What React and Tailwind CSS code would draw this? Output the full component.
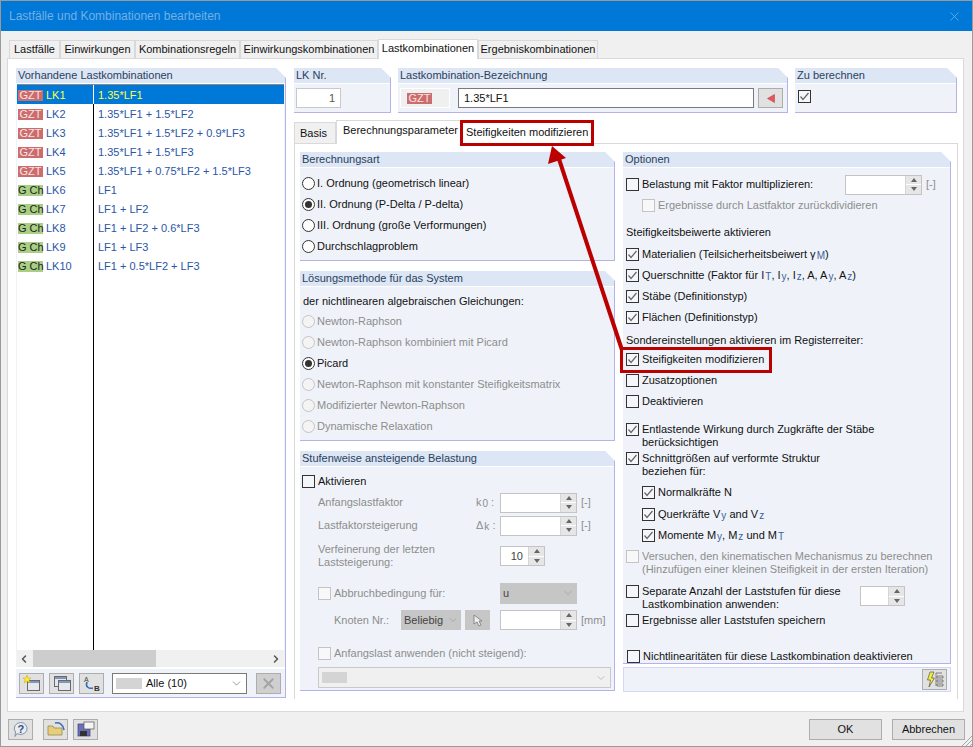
import { ChevronDown, ChevronLeft, ChevronRight, X } from "lucide-react";

const combos = [
  ["GZT", "LK1", "1.35*LF1"],
  ["GZT", "LK2", "1.35*LF1 + 1.5*LF2"],
  ["GZT", "LK3", "1.35*LF1 + 1.5*LF2 + 0.9*LF3"],
  ["GZT", "LK4", "1.35*LF1 + 1.5*LF3"],
  ["GZT", "LK5", "1.35*LF1 + 0.75*LF2 + 1.5*LF3"],
  ["G Ch", "LK6", "LF1"],
  ["G Ch", "LK7", "LF1 + LF2"],
  ["G Ch", "LK8", "LF1 + LF2 + 0.6*LF3"],
  ["G Ch", "LK9", "LF1 + LF3"],
  ["G Ch", "LK10", "LF1 + 0.5*LF2 + LF3"],
];

const Group = ({ title, className = "", bodyClass = "", children }) => (
  <div className={`flex flex-col bg-[#eff3f9] border-r border-b border-[#b3b3ea] [clip-path:polygon(0_0,calc(100%-10px)_0,100%_10px,100%_100%,0_100%)] ${className}`}>
    <div className="h-[16px] shrink-0 bg-[#dce6f4] border-b border-white pl-[2px] text-[#2b3f5c] leading-[15px] whitespace-nowrap">{title}</div>
    <div className={`flex-1 min-h-0 ${bodyClass}`}>{children}</div>
  </div>
);

const Check = ({ on, off }) => (
  <span className={`w-[13px] h-[13px] shrink-0 border flex items-center justify-center ${off ? "border-[#c4c4c4] bg-[#f8f8f8]" : "border-[#333] bg-[#f4f6fa]"}`}>
    {on && (
      <svg width="11" height="11" viewBox="0 0 11 11">
        <path d="M1.5 5.5 L4 8.5 L9.5 2" fill="none" stroke="#666" strokeWidth="1.2" />
      </svg>
    )}
  </span>
);

const CheckRow = ({ on, off, label, className = "", lines }) => (
  <div className={`flex gap-[3px] whitespace-nowrap ${lines ? "items-start" : "items-center h-[21px]"} ${className}`}>
    <Check on={on} off={off} />
    <span className={off ? "text-[#8d8d8d]" : "text-[#111]"}>{label}</span>
  </div>
);

const Radio = ({ on, off, label }) => (
  <div className="flex items-center h-[21px] gap-[2px] whitespace-nowrap">
    <span className={`w-[13px] h-[13px] rounded-full border flex items-center justify-center shrink-0 ${off ? "border-[#c4c4c4] bg-[#f4f4f4]" : "border-[#333] bg-white"}`}>
      {on && <span className="w-[7px] h-[7px] rounded-full bg-[#333]" />}
    </span>
    <span className={off ? "text-[#8d8d8d]" : "text-[#111]"}>{label}</span>
  </div>
);

const Spin = ({ w = 77, value, field = "bg-white" }) => (
  <span className="flex h-[20px] border border-[#c4c4c4] shrink-0" style={{ width: w }}>
    <span className={`flex-1 ${field} text-right pr-[5px] leading-[18px] text-[#444]`}>{value}</span>
    <span className="w-[16px] flex flex-col bg-[#e6e6e6] border-l border-[#d6d6d6]">
      <span className="flex-1 flex items-center justify-center">
        <span className="w-0 h-0 border-x-[3px] border-x-transparent border-b-[4px] border-b-[#666]" />
      </span>
      <span className="flex-1 flex items-center justify-center border-t border-white">
        <span className="w-0 h-0 border-x-[3px] border-x-transparent border-t-[4px] border-t-[#666]" />
      </span>
    </span>
  </span>
);

const ToolBtn = ({ children, className = "", bg = "bg-[#e1e1e1]" }) => (
  <span className={`w-[25px] h-[21px] shrink-0 border border-[#adadad] ${bg} flex items-center justify-center ${className}`}>{children}</span>
);

const Sub = ({ children, c = "text-[#3a5f9e]" }) => (
  <span className={`text-[10px] ml-[1px] relative top-[1px] ${c}`}>{children}</span>
);

const WinIcon = ({ x, y }) => (
  <g>
    <rect x={x + 0.5} y={y + 0.5} width="12" height="10" fill="#e4e7ec" stroke="#6a6a6a" />
    <rect x={x + 1} y={y + 1} width="11" height="2" fill="#7f96bd" />
  </g>
);

const tabs = [
  ["Lastfälle", "w-[51px]"],
  ["Einwirkungen", "w-[75px]"],
  ["Kombinationsregeln", "w-[105px]"],
  ["Einwirkungskombinationen", "w-[138px]"],
  ["Lastkombinationen", "w-[100px]"],
  ["Ergebniskombinationen", "w-[120px]"],
];

const App = () => (
  <div className="relative w-[973px] h-[747px] overflow-hidden flex flex-col bg-[#f0f0f0] border border-[#9a9a9a] text-[11px] font-['Liberation_Sans',Arial,sans-serif] text-[#111]">
    {/* titlebar */}
    <div className="h-[30px] shrink-0 bg-[#0078d7] flex items-center justify-between pl-[8px] pr-[10px]">
      <span className="text-[12px] text-[#74afe6]">Lastfälle und Kombinationen bearbeiten</span>
      <X size={15} strokeWidth={1} className="text-[#8cc0ea]" />
    </div>

    {/* top tabs */}
    <div className="h-[27px] shrink-0 flex items-end pl-[8px]">
      {tabs.map(([t, w]) => (
        <span
          key={t}
          className={
            t === "Lastkombinationen"
              ? `${w} h-[20px] text-center bg-white border border-b-0 border-[#d9d9d9] leading-[16px] relative top-px whitespace-nowrap`
              : `${w} h-[18px] text-center bg-[#f0f0f0] border border-b-0 border-[#d9d9d9] leading-[17px] whitespace-nowrap`
          }
        >
          {t}
        </span>
      ))}
    </div>

    {/* main panel */}
    <div className="w-[957px] h-[654px] ml-[6px] bg-white border border-[#d9d9d9] flex gap-[8px] pt-[9px] pl-[8px]">
      {/* left list */}
      <Group title="Vorhandene Lastkombinationen" className="w-[270px] h-[630px]" bodyClass="flex flex-col">
        <div className="relative mx-[1px] flex-1 bg-white border-t border-[#888] overflow-hidden flex">
          <div className="w-[77px] shrink-0 border-r border-black">
            {combos.map(([kind, nr], i) => (
              <div key={nr} className={`h-[19px] flex items-center pt-px ${i === 0 ? "bg-[#0078d7] -mr-px border-r border-white" : ""}`}>
                <span className={`w-[25px] ml-px h-[11px] text-center leading-[11px] whitespace-nowrap ${kind === "GZT" ? "bg-[#cd6c6c] text-[#f6e6e6]" : "bg-[#a9cf85] text-[#222]"}`}>{kind}</span>
                <span className={`pl-[3px] ${i === 0 ? "text-[#ffff40]" : "text-[#2a55a8]"}`}>{nr}</span>
              </div>
            ))}
          </div>
          <div className="flex-1">
            {combos.map(([kind, nr, formula], i) => (
              <div key={nr} className={`h-[19px] flex items-center pt-px pl-[4px] whitespace-nowrap ${i === 0 ? "bg-[#0078d7] text-[#ffff40]" : "text-[#2a55a8]"}`}>{formula}</div>
            ))}
          </div>
        </div>
        <div className="mx-[1px] h-[17px] bg-[#f0f0f0] flex items-center justify-between shrink-0">
          <ChevronLeft size={12} strokeWidth={3} className="text-[#555] ml-[1px]" />
          <span className="w-[123px] h-full bg-[#cdcdcd] mr-auto ml-[3px]" />
          <ChevronRight size={12} strokeWidth={3} className="text-[#555] mr-[2px]" />
        </div>
        <div className="h-[30px] shrink-0 flex items-center pl-[3px] gap-[5px] border-t-2 border-white">
          <ToolBtn>
            <svg width="18" height="16" viewBox="0 0 18 16">
              <WinIcon x={4} y={5} />
              <path d="M4 0 L5 3 L8 3 L6 5 L7 8 L4 6 L1 8 L2 5 L0 3 L3 3 Z" fill="#ffe93a" stroke="#c9a800" strokeWidth="0.5" />
            </svg>
          </ToolBtn>
          <ToolBtn>
            <svg width="18" height="16" viewBox="0 0 18 16">
              <WinIcon x={1} y={1} />
              <WinIcon x={5} y={5} />
            </svg>
          </ToolBtn>
          <ToolBtn>
            <svg width="20" height="17" viewBox="0 0 20 17">
              <text x="2" y="7" fontSize="7" fill="#444">A</text>
              <path d="M5 7 C3 12 7 14 11 13" fill="none" stroke="#2d6fb5" strokeWidth="1.6" />
              <text x="12" y="16" fontSize="8" fontWeight="bold" fill="#333">B</text>
            </svg>
          </ToolBtn>
          <span className="ml-[3px] w-[135px] h-[21px] bg-white border border-[#7a7a7a] flex items-center pl-[3px] pr-[3px]">
            <span className="w-[26px] h-[11px] bg-[#d4d4d4] mr-[4px]" />
            <span>Alle (10)</span>
            <ChevronDown size={13} strokeWidth={1} className="ml-auto text-[#444]" />
          </span>
          <ToolBtn className="ml-[4px]" bg="bg-[#cfcfcf]">
            <X size={17} strokeWidth={2.5} className="text-[#a3a3a3]" />
          </ToolBtn>
        </div>
      </Group>

      {/* right side */}
      <div className="w-[664px] flex flex-col">
        <div className="flex h-[45px] gap-[7px]">
          <Group title="LK Nr." className="w-[97px]" bodyClass="pt-[4px] pl-[2px]">
            <span className="block w-[45px] h-[20px] bg-white border border-[#c9c9c9] text-right pr-[5px] text-[#555] leading-[19px]">1</span>
          </Group>
          <Group title="Lastkombination-Bezeichnung" className="w-[390px]" bodyClass="pt-[4px] pl-[2px] flex items-start">
            <span className="w-[50px] h-[20px] bg-[#f0f0f0] border border-white flex items-center pl-[6px]">
              <span className="w-[25px] h-[11px] bg-[#cd6c6c] text-[#f6e6e6] text-center leading-[11px]">GZT</span>
            </span>
            <span className="ml-[8px] w-[296px] h-[20px] bg-white border border-[#7a7a7a] pl-[5px] leading-[18px]">1.35*LF1</span>
            <span className="ml-[4px] w-[25px] h-[20px] bg-[#e1e1e1] border border-[#adadad] flex items-center justify-center">
              <svg width="8" height="9" viewBox="0 0 8 9">
                <path d="M7.5 0.5 L7.5 8.5 L0.5 4.5 Z" fill="#e4575d" stroke="#b33" strokeWidth="0.5" />
              </svg>
            </span>
          </Group>
          <Group title="Zu berechnen" className="w-[162px]" bodyClass="pt-[6px] pl-[3px]">
            <Check on />
          </Group>
        </div>

        {/* sub tabs */}
        <div className="h-[30px] flex items-end">
          <span className="h-[21px] w-[42px] pl-[5px] bg-[#f0f0f0] border border-b-0 border-[#d9d9d9] leading-[20px]">Basis</span>
          <span className="h-[24px] w-[125px] pl-[6px] bg-white border border-b-0 border-[#d9d9d9] leading-[19px] whitespace-nowrap relative top-px">Berechnungsparameter</span>
          <span className="h-[21px] pl-[5px] pr-[6px] leading-[20px] whitespace-nowrap">Steifigkeiten modifizieren</span>
        </div>

        {/* sub panel */}
        <div className="w-[664px] h-[556px] border border-[#d9d9d9] border-b-0 flex gap-[8px] pt-[8px] pl-[5px]">
          <div className="w-[315px] flex flex-col gap-[10px]">
            <Group title="Berechnungsart" className="h-[109px]" bodyClass="pt-[5px] pl-[2px]">
              <Radio on={false} label="I. Ordnung (geometrisch linear)" />
              <Radio on label="II. Ordnung (P-Delta / P-delta)" />
              <Radio label="III. Ordnung (große Verformungen)" />
              <Radio label="Durchschlagproblem" />
            </Group>
            <Group title="Lösungsmethode für das System" className="h-[170px]" bodyClass="pt-[4px] pl-[2px]">
              <div className="h-[20px] leading-[20px] pl-px">der nichtlinearen algebraischen Gleichungen:</div>
              <Radio off label="Newton-Raphson" />
              <Radio off label="Newton-Raphson kombiniert mit Picard" />
              <Radio on label="Picard" />
              <Radio off label="Newton-Raphson mit konstanter Steifigkeitsmatrix" />
              <Radio off label="Modifizierter Newton-Raphson" />
              <Radio off label="Dynamische Relaxation" />
            </Group>
            <Group title="Stufenweise ansteigende Belastung" className="h-[240px]" bodyClass="pt-[4px] pl-[2px] text-[#8d8d8d]">
              <CheckRow label="Aktivieren" />
              <div className="flex items-center h-[23px] pl-[16px] -mt-px">
                <span className="w-[158px]">Anfangslastfaktor</span>
                <span className="w-[24px]">k<Sub c="text-[#8d8d8d]">0</Sub> :</span>
                <Spin />
                <span className="ml-[4px]">[-]</span>
              </div>
              <div className="flex items-center h-[23px] pl-[16px]">
                <span className="w-[158px]">Lastfaktorsteigerung</span>
                <span className="w-[24px]">Δ<Sub c="text-[#8d8d8d]">k</Sub> :</span>
                <Spin />
                <span className="ml-[4px]">[-]</span>
              </div>
              <div className="flex items-center h-[34px] mt-[2px] pl-[16px]">
                <span className="w-[182px] leading-[13px]">Verfeinerung der letzten<br />Laststeigerung:</span>
                <Spin w={45} value="10" />
              </div>
              <div className="flex items-center h-[22px] mt-[9px] pl-[16px]">
                <Check off />
                <span className="w-[169px] pl-[3px] whitespace-nowrap">Abbruchbedingung für:</span>
                <span className="w-[77px] h-[21px] bg-[#c6c6c6] flex items-center justify-between px-[3px] text-[#444]">
                  u
                  <ChevronDown size={12} strokeWidth={1} className="text-[#8d8d8d]" />
                </span>
              </div>
              <div className="flex items-center h-[22px] mt-[5px] pl-[32px]">
                <span className="w-[67px]">Knoten Nr.:</span>
                <span className="w-[60px] h-[20px] bg-[#c6c6c6] flex items-center justify-between pl-[3px] pr-[2px] text-[#444]">
                  Beliebig
                  <ChevronDown size={12} strokeWidth={1} className="text-[#8d8d8d]" />
                </span>
                <span className="ml-[4px] w-[25px] h-[20px] bg-[#c6c6c6] flex items-center justify-center">
                  <svg width="14" height="16" viewBox="0 0 14 16">
                    <path d="M3 3 L3 12 L6 10 L8 14 L10 13 L8 9 L11 9 Z" fill="#eee" stroke="#777" strokeWidth="0.8" />
                  </svg>
                </span>
                <span className="ml-[10px]"><Spin /></span>
                <span className="ml-[4px]">[mm]</span>
              </div>
              <div className="flex items-center h-[20px] mt-[12px] pl-[16px] gap-[3px] whitespace-nowrap">
                <Check off />
                <span>Anfangslast anwenden (nicht steigend):</span>
              </div>
              <span className="mt-[4px] ml-[16px] w-[293px] h-[21px] bg-[#f0f0f0] border border-[#c9c9c9] flex items-center justify-between pl-[3px] pr-[3px]">
                <span className="w-[25px] h-[11px] bg-[#d4d4d4]" />
                <ChevronDown size={12} strokeWidth={1} className="text-[#8d8d8d]" />
              </span>
            </Group>
          </div>

          <div className="w-[328px] flex flex-col gap-[3px]">
            <Group title="Optionen" className="h-[512px]" bodyClass="pt-[6px] pl-[3px]">
              <div className="flex items-center h-[21px]">
                <div className="w-[219px]"><CheckRow label="Belastung mit Faktor multiplizieren:" /></div>
                <Spin />
                <span className="ml-[4px] text-[#8d8d8d]">[-]</span>
              </div>
              <CheckRow off label="Ergebnisse durch Lastfaktor zurückdividieren" className="pl-[16px]" />
              <div className="h-[21px] mt-[6px] leading-[20px]">Steifigkeitsbeiwerte aktivieren</div>
              <CheckRow on className="mt-px" label={<>Materialien (Teilsicherheitsbeiwert γ<Sub>M</Sub>)</>} />
              <CheckRow on label={<>Querschnitte (Faktor für I<Sub>T</Sub>, I<Sub>y</Sub>, I<Sub>z</Sub>, A, A<Sub>y</Sub>, A<Sub>z</Sub>)</>} />
              <CheckRow on label="Stäbe (Definitionstyp)" />
              <CheckRow on label="Flächen (Definitionstyp)" />
              <div className="h-[21px] mt-[2px] leading-[20px] whitespace-nowrap">Sondereinstellungen aktivieren im Registerreiter:</div>
              <CheckRow on label="Steifigkeiten modifizieren" className="-mt-[2px]" />
              <CheckRow label="Zusatzoptionen" />
              <CheckRow label="Deaktivieren" />
              <CheckRow on lines label={<>Entlastende Wirkung durch Zugkräfte der Stäbe<br />berücksichtigen</>} className="mt-[11px] leading-[13px]" />
              <CheckRow on lines label={<>Schnittgrößen auf verformte Struktur<br />beziehen für:</>} className="mt-[3px] leading-[13px]" />
              <div className="pl-[16px] mt-[4px]">
                <CheckRow on label="Normalkräfte N" />
                <CheckRow on className="mt-px" label={<>Querkräfte V<Sub>y</Sub> and V<Sub>z</Sub></>} />
                <CheckRow on label={<>Momente M<Sub>y</Sub>, M<Sub>z</Sub> und M<Sub>T</Sub></>} />
              </div>
              <CheckRow off lines label={<>Versuchen, den kinematischen Mechanismus zu berechnen<br />(Hinzufügen einer kleinen Steifigkeit in der ersten Iteration)</>} className="mt-[4px] leading-[13px]" />
              <div className="flex items-start mt-[9px]">
                <div className="w-[234px]"><CheckRow lines label={<>Separate Anzahl der Laststufen für diese<br />Lastkombination anwenden:</>} className="leading-[13px]" /></div>
                <span className="mt-[1px]"><Spin w={45} /></span>
              </div>
              <CheckRow label="Ergebnisse aller Laststufen speichern" className="-mt-px" />
              <CheckRow label="Nichtlinearitäten für diese Lastkombination deaktivieren" className="mt-[15px] pl-px" />
            </Group>
            <div className="h-[25px] bg-[#eff3f9] border border-[#d4d8f4] flex items-center justify-end pr-[3px]">
              <ToolBtn>
                <svg width="20" height="17" viewBox="0 0 20 17">
                  <path d="M5 1 L9 1 L6.5 7 L9.5 7 L4 16 L5.5 9 L2.5 9 Z" fill="#f1ee3e" stroke="#555" strokeWidth="0.7" />
                  <path d="M11 2 H17 M11 2 V15 M12 5 H18 V7 H12 Z M12 9 H18 V11 H12 Z M12 13 H18 V15 H12 Z" fill="none" stroke="#666" strokeWidth="0.8" />
                </svg>
              </ToolBtn>
            </div>
          </div>
        </div>
      </div>
    </div>

    {/* footer */}
    <div className="flex-1 flex items-center pl-[7px] pr-[7px]">
      <ToolBtn>
        <svg width="17" height="17" viewBox="0 0 17 17">
          <path d="M8.5 1.5 A6.5 6 0 1 1 5 12.5 L3 15.5 L3.5 11 A6.5 6 0 0 1 8.5 1.5 Z" fill="#e8edf4" stroke="#8392a8" />
          <text x="5.5" y="12" fontSize="11" fontWeight="bold" fill="#35507f">?</text>
        </svg>
      </ToolBtn>
      <ToolBtn className="ml-[10px]">
        <svg width="18" height="16" viewBox="0 0 18 16">
          <path d="M1 5 H6 L7 7 H15 V14 H1 Z" fill="#e6cf7c" stroke="#927f3d" strokeWidth="0.7" />
          <path d="M8 2 C12 1 16 3 17 9" fill="none" stroke="#3f6fb5" strokeWidth="1.6" />
        </svg>
      </ToolBtn>
      <ToolBtn className="ml-[5px]">
        <svg width="18" height="16" viewBox="0 0 18 16">
          <rect x="1" y="3" width="12" height="12" fill="#6a70b8" stroke="#3a3f78" strokeWidth="0.7" />
          <rect x="3" y="10" width="7" height="5" fill="#333" />
          <rect x="7" y="1" width="10" height="7" fill="#f4f4f4" stroke="#555" strokeWidth="0.7" />
        </svg>
      </ToolBtn>
      <span className="ml-auto w-[73px] h-[21px] bg-[#e1e1e1] border border-[#adadad] text-center leading-[19px]">OK</span>
      <span className="ml-[10px] w-[73px] h-[21px] bg-[#e1e1e1] border border-[#adadad] text-center leading-[19px]">Abbrechen</span>
    </div>

    {/* red callouts */}
    <span className="absolute left-[459px] top-[119px] w-[134px] h-[26px] border-[3px] border-[#bb0000]" />
    <span className="absolute left-[619px] top-[346px] w-[152px] h-[26px] border-[3px] border-[#bb0000]" />
    <svg className="absolute left-0 top-0 pointer-events-none" width="973" height="747">
      <path d="M621 349 L558 158" stroke="#bb0000" strokeWidth="4" fill="none" />
      <path d="M551 145 L565 157 L547 163 Z" fill="#bb0000" />
      <path d="M971 735 L960 746 M971 739 L964 746 M971 743 L968 746" stroke="#a8a8a8" strokeWidth="1" />
    </svg>
  </div>
);

export default App;
